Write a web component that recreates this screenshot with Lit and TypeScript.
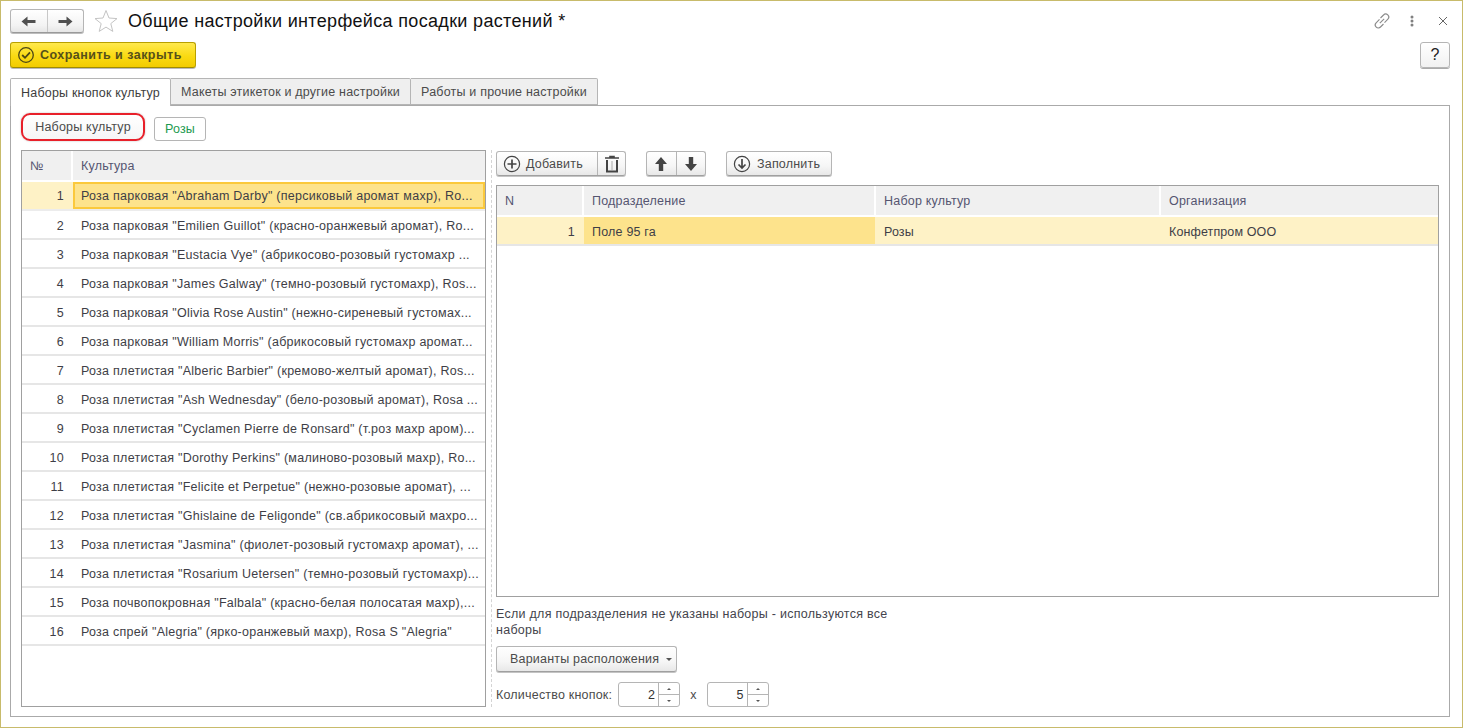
import { LitElement, html, css, svg } from "lit";
import { customElement } from "lit/decorators.js";

const rows = [
  'Роза парковая "Abraham Darby" (персиковый аромат махр), Ro...',
  'Роза парковая "Emilien Guillot" (красно-оранжевый аромат), Ro...',
  'Роза парковая "Eustacia Vye" (абрикосово-розовый густомахр ...',
  'Роза парковая "James Galway" (темно-розовый густомахр), Ros...',
  'Роза парковая "Olivia Rose Austin" (нежно-сиреневый густомах...',
  'Роза парковая "William Morris" (абрикосовый густомахр аромат...',
  'Роза плетистая "Alberic Barbier" (кремово-желтый аромат), Ros...',
  'Роза плетистая "Ash Wednesday" (бело-розовый аромат), Rosa ...',
  'Роза плетистая "Cyclamen Pierre de Ronsard" (т.роз махр аром)...',
  'Роза плетистая "Dorothy Perkins" (малиново-розовый махр), Ro...',
  'Роза плетистая "Felicite et Perpetue" (нежно-розовые аромат), ...',
  'Роза плетистая "Ghislaine de Feligonde" (св.абрикосовый махро...',
  'Роза плетистая "Jasmina" (фиолет-розовый густомахр аромат), ...',
  'Роза плетистая "Rosarium Uetersen" (темно-розовый густомахр)...',
  'Роза почвопокровная "Falbala" (красно-белая полосатая махр),...',
  'Роза спрей "Alegria" (ярко-оранжевый махр), Rosa S "Alegria"',
];

const circleIcon = (inner: unknown) => html`<svg class="ic" width="18" height="18" viewBox="0 0 18 18" fill="none" stroke="#444">
  <circle cx="9" cy="9" r="7.6" stroke-width="1.2"></circle>${inner}</svg>`;

@customElement("app-root")
export class AppRoot extends LitElement {
  static styles = css`
    :host {
      display: block;
      width: 1463px;
      height: 728px;
      font-family: "Liberation Sans", Arial, sans-serif;
      font-size: 12.5px;
      letter-spacing: 0.2px;
      color: #4b4b4b;
    }
    * { box-sizing: border-box; }
    .win {
      width: 1463px;
      height: 728px;
      border: 1px solid #c8bb6b;
      background: #fff;
      padding: 8px 12px 10px 9px;
      display: flex;
      flex-direction: column;
    }
    .head { display: flex; align-items: center; height: 24px; }
    .nav {
      display: flex;
      width: 74px;
      height: 24px;
      border: 1px solid #b5b5b5;
      border-bottom-color: #9a9a9a;
      border-radius: 3px;
      background: linear-gradient(#fff, #f3f3f3 70%, #e6e6e6);
      box-shadow: 0 1px 0 #bdbdbd;
    }
    .nav span { flex: 1; display: flex; align-items: center; justify-content: center; }
    .nav span + span { border-left: 1px solid #c8c8c8; }
    .star { margin-left: 10px; display: block; }
    .title {
      margin-left: 10px;
      font-size: 18px;
      letter-spacing: 0.33px;
      color: #111;
      flex: 1;
      white-space: nowrap;
    }
    .tools { display: flex; align-items: center; gap: 18px; margin-right: 2px; }
    .tools svg { display: block; }
    .tools .close { margin-left: 5px; }
    .bar { display: flex; justify-content: space-between; margin-top: 9px; height: 27px; }
    .save {
      width: 186px;
      height: 26px;
      border: 1px solid #b8a000;
      border-bottom-color: #a08c00;
      border-radius: 3px;
      background: linear-gradient(#ffe94d, #fada12 55%, #f2cc00);
      box-shadow: 0 1px 0 #bbb;
      display: flex;
      align-items: center;
      padding-left: 6px;
      gap: 5px;
      font-weight: bold;
      color: #56501a;
      font-size: 12.5px;
      letter-spacing: 0.47px;
    }
    .help {
      width: 30px;
      height: 26px;
      border: 1px solid #b5b5b5;
      border-radius: 3px;
      background: linear-gradient(#fff, #f1f1f1);
      box-shadow: 0 1px 0 #aaa;
      display: flex;
      align-items: center;
      justify-content: center;
      color: #222;
      font-size: 16px;
    }
    .tabs { display: flex; margin-top: 9px; height: 28px; position: relative; z-index: 1; }
    .tab {
      height: 27px;
      border: 1px solid #b5b5b5;
      border-left: 0;
      border-radius: 0 2px 0 0;
      background: #efefef;
      padding: 0 10px;
      display: flex;
      align-items: center;
      white-space: nowrap;
    }
    .tab.on {
      background: #fff;
      height: 28px;
      border-left: 1px solid #b5b5b5;
      border-bottom: 0;
      border-radius: 2px 2px 0 0;
      color: #3d3d3d;
    }
    .panel {
      flex: 1;
      margin-top: -1px;
      border: 1px solid #aaa;
      padding: 7px 10px 9px 10px;
      display: flex;
      flex-direction: column;
      min-height: 0;
    }
    .sets { display: flex; align-items: flex-end; gap: 9px; height: 28px; }
    .setbtn {
      height: 24px;
      border: 1px solid #b5b5b5;
      border-radius: 3px;
      background: #fff;
      display: flex;
      align-items: center;
      justify-content: center;
    }
    .setbtn.red {
      width: 124px;
      height: 28px;
      border: 2px solid #e8202a;
      border-radius: 9px;
      box-shadow: 0 0 2px #bbb;
      background: linear-gradient(#fff, #f6f6f6);
    }
    .setbtn.green { width: 52px; color: #1d9a50; }
    .main { flex: 1; display: flex; margin-top: 9px; min-height: 0; }
    .left {
      width: 465px;
      border: 1px solid #a0a0a0;
      display: flex;
      flex-direction: column;
    }
    .split { width: 10px; display: flex; justify-content: center; }
    .split i { display: block; width: 0; border-left: 1px dashed #d4d4d4; }
    .right { flex: 1; display: flex; flex-direction: column; min-width: 0; }
    .th {
      display: grid;
      background: #f0f0f0;
      color: #555570;
      align-items: stretch;
    }
    .th span { display: flex; align-items: center; padding-left: 8px; border-right: 2px solid #fff; }
    .th span:last-child { border-right: 0; }
    .lh { grid-template-columns: 51px 1fr; height: 31px; border-bottom: 2px solid #fff; }
    .lr {
      display: grid;
      grid-template-columns: 51px 1fr;
      height: 29px;
      padding-top: 2px;
      border-bottom: 2px solid #e6e6e6;
      color: #3e3e46;
      align-items: center;
      letter-spacing: 0.26px;
    }
    .num { text-align: right; padding-right: 9px; }
    .txt { padding-left: 8px; white-space: nowrap; overflow: hidden; }
    .lr.sel { border-bottom-color: #ececec; padding-top: 0; }
    .lr.sel .num { background: #fef2c6; height: 100%; display: flex; align-items: center; justify-content: flex-end; }
    .lr.sel .txt {
      background: #fde38c;
      border: 2px solid #fbc93c;
      height: 100%;
      display: flex;
      align-items: center;
      padding-left: 6px;
    }
    .rt { display: flex; height: 25px; margin-top: 1px; flex-shrink: 0; }
    .btn {
      height: 25px;
      border: 1px solid #b5b5b5;
      border-bottom-color: #a0a0a0;
      border-radius: 3px;
      background: linear-gradient(#fff, #f6f6f6 60%, #e8e8e8);
      box-shadow: 0 1px 0 #c4c4c4;
      display: flex;
      align-items: center;
      white-space: nowrap;
    }
    .btn .cell { height: 100%; display: flex; align-items: center; justify-content: center; }
    .btn .cell + .cell { border-left: 1px solid #b5b5b5; }
    .g0 { width: 130px; }
    .wide { flex: 1; }
    .addc { width: 100px; gap: 5px; justify-content: flex-start !important; padding-left: 6px; }
    .fill { width: 106px; padding-left: 6px; gap: 6px; margin-left: 20px; }
    .g2 { width: 60px; margin-left: 20px; }
    .rtable {
      margin-top: 9px;
      height: 412px;
      flex-shrink: 0;
      border: 1px solid #a0a0a0;
    }
    .rh, .rr { grid-template-columns: 87px 292px 285px 1fr; }
    .rh { height: 31px; border-bottom: 2px solid #fff; }
    .rr {
      display: grid;
      height: 29px;
      border-bottom: 2px solid #e6e6e6;
      color: #3e3e46;
      background: #fef2c6;
    }
    .rr > div { display: flex; align-items: center; padding-top: 2px; }
    .rr .num { justify-content: flex-end; }
    .rr .act { background: #fde38c; padding-left: 8px; margin-right: 1px; }
    .rr .txt { padding-left: 8px; letter-spacing: 0.12px; }
    .note { margin-top: 9px; width: 400px; line-height: 16px; color: #44444c; letter-spacing: 0.27px; flex-shrink: 0; }
    .vars {
      margin-top: 8px;
      width: 181px;
      height: 26px;
      padding-left: 13px;
      gap: 7px;
      flex-shrink: 0;
    }
    .caret { width: 0; height: 0; border: 3.5px solid transparent; border-top: 3.5px solid #555; border-bottom: 0; }
    .count { display: flex; align-items: center; margin-top: 10px; height: 25px; flex-shrink: 0; }
    .spin {
      height: 25px;
      border: 1px solid #b5b5b5;
      border-radius: 3px;
      display: flex;
      margin-left: 6px;
    }
    .spin.b { margin-left: 0; }
    .spin .val { width: 39px; padding-right: 3px; display: flex; align-items: center; justify-content: flex-end; color: #333; }
    .ud { width: 21px; border-left: 1px solid #b5b5b5; display: flex; flex-direction: column; }
    .ud i { flex: 1; display: flex; align-items: center; justify-content: center; }
    .ud i + i { border-top: 1px solid #b5b5b5; }
    .up { width: 0; height: 0; border: 2px solid transparent; border-bottom: 2px solid #555; border-top: 0; }
    .dn { width: 0; height: 0; border: 2px solid transparent; border-top: 2px solid #555; border-bottom: 0; }
    .x { margin: 0 10px; }
  `;

  render() {
    return html`<div class="win">
      <div class="head">
        <div class="nav">
          <span><svg width="15" height="11" viewBox="0 0 15 11"><path d="M0.5 5.5 L6.5 0.5 V4 H14.5 V7 H6.5 V10.5 Z" fill="#505050"></path></svg></span>
          <span><svg width="15" height="11" viewBox="0 0 15 11"><path d="M14.5 5.5 L8.5 0.5 V4 H0.5 V7 H8.5 V10.5 Z" fill="#505050"></path></svg></span>
        </div>
        <svg class="star" width="24" height="24" viewBox="0 0 24 24"><path d="M12 1.5 L15 9 L23 9.6 L16.8 14.6 L18.8 22.4 L12 18.1 L5.2 22.4 L7.2 14.6 L1 9.6 L9 9 Z" fill="none" stroke="#c4c4c4"></path></svg>
        <div class="title">Общие настройки интерфейса посадки растений *</div>
        <div class="tools">
          <svg width="18" height="18" viewBox="0 0 18 18" fill="none" stroke="#8a8a8a" stroke-width="1.1"><path d="M7.5 6 L10.5 3 a3 3 0 0 1 4.4 4.2 L11.5 10.6"></path><path d="M10.5 12 L7.5 15 a3 3 0 0 1 -4.4 -4.2 L6.5 7.4"></path><path d="M6.8 11.2 L11.2 6.8"></path></svg>
          <svg width="6" height="12" viewBox="0 0 6 12" fill="#808080"><circle cx="3" cy="2" r="1.5"></circle><circle cx="3" cy="6" r="1.5"></circle><circle cx="3" cy="10" r="1.5"></circle></svg>
          <svg class="close" width="10" height="10" viewBox="0 0 10 10" stroke="#666" stroke-width="1"><path d="M1 1 L9 9 M9 1 L1 9"></path></svg>
        </div>
      </div>
      <div class="bar">
        <div class="save">
          <svg width="18" height="18" viewBox="0 0 18 18" fill="none" stroke="#4c4716" stroke-width="1.3"><circle cx="9" cy="9" r="7.3"></circle><path d="M5.2 9 L8 11.8 L13 6.4" stroke-width="1.8"></path></svg>
          Сохранить и закрыть
        </div>
        <div class="help">?</div>
      </div>
      <div class="tabs">
        <div class="tab on">Наборы кнопок культур</div>
        <div class="tab">Макеты этикеток и другие настройки</div>
        <div class="tab">Работы и прочие настройки</div>
      </div>
      <div class="panel">
        <div class="sets">
          <div class="setbtn red">Наборы культур</div>
          <div class="setbtn green">Розы</div>
        </div>
        <div class="main">
          <div class="left">
            <div class="th lh"><span>№</span><span>Культура</span></div>
            ${rows.map(
              (r, i) => html`<div class="lr ${i === 0 ? "sel" : ""}"><div class="num">${i + 1}</div><div class="txt">${r}</div></div>`
            )}
          </div>
          <div class="split"><i></i></div>
          <div class="right">
            <div class="rt">
              <div class="btn g0">
                <div class="cell addc">${circleIcon(svg`<path d="M9 4.5 V13.5 M4.5 9 H13.5" stroke-width="1.7"></path>`)}Добавить</div>
                <div class="cell wide">
                  <svg width="16" height="18" viewBox="0 0 16 18" fill="none" stroke="#444"><path d="M1 3 H15 M6 3 V1.5 H10 V3" stroke-width="1.6"></path><path d="M3 5 V16.5 H13 V5" stroke-width="2"></path><path d="M8 6 V15" stroke="#aaa" stroke-width="1"></path></svg>
                </div>
              </div>
              <div class="btn g2">
                <div class="cell wide"><svg width="12" height="14" viewBox="0 0 12 14" fill="#444"><path d="M6 0 L12 7 H8.2 V14 H3.8 V7 H0 Z"></path></svg></div>
                <div class="cell wide"><svg width="12" height="14" viewBox="0 0 12 14" fill="#444"><path d="M6 14 L12 7 H8.2 V0 H3.8 V7 H0 Z"></path></svg></div>
              </div>
              <div class="btn fill">
                ${circleIcon(svg`<path d="M9 4 V13 M5.5 9.5 L9 13 L12.5 9.5" stroke-width="1.7"></path>`)}Заполнить
              </div>
            </div>
            <div class="rtable">
              <div class="th rh"><span>N</span><span>Подразделение</span><span>Набор культур</span><span>Организация</span></div>
              <div class="rr">
                <div class="num">1</div>
                <div class="act">Поле 95 га</div>
                <div class="txt">Розы</div>
                <div class="txt">Конфетпром ООО</div>
              </div>
            </div>
            <div class="note">Если для подразделения не указаны наборы - используются все наборы</div>
            <div class="btn vars">Варианты расположения <span class="caret"></span></div>
            <div class="count">
              Количество кнопок:
              <div class="spin"><div class="val">2</div><div class="ud"><i><b class="up"></b></i><i><b class="dn"></b></i></div></div>
              <span class="x">x</span>
              <div class="spin b"><div class="val">5</div><div class="ud"><i><b class="up"></b></i><i><b class="dn"></b></i></div></div>
            </div>
          </div>
        </div>
      </div>
    </div>`;
  }
}
